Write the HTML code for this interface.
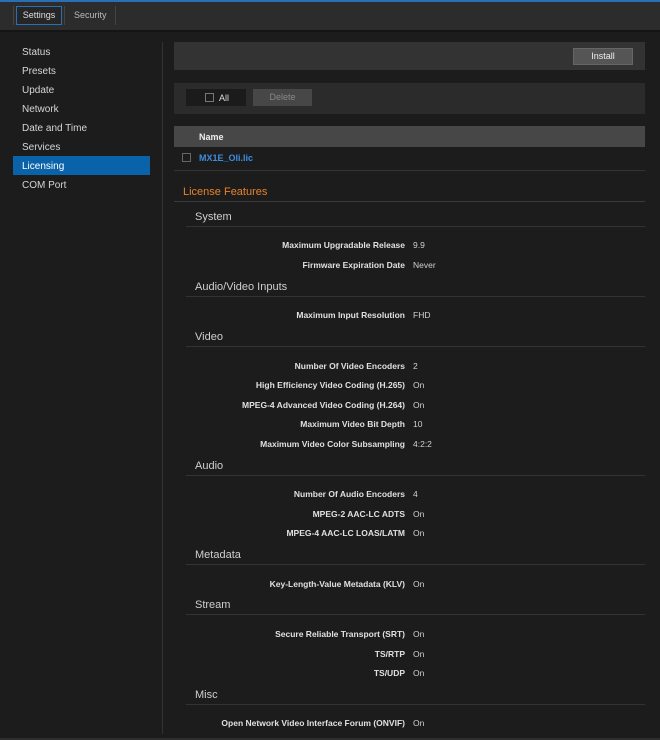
<!DOCTYPE html><html><head><style>
body{margin:0;width:660px;height:740px;background:#1c1c1c;font-family:"Liberation Sans",sans-serif;position:relative;overflow:hidden;color:#ddd}
div,span{position:absolute;box-sizing:border-box}
.t{font-size:9px;white-space:nowrap}
.nav{left:22px;font-size:10px;color:#d6d6d6}
.h{left:195px;font-size:11px;color:#cfcfcf}
.ln{left:186px;width:459px;height:1px;background:#333}
.l{right:255px;font-size:8.5px;font-weight:bold;color:#e0e0e0;white-space:nowrap}
.v{left:413px;font-size:8.5px;color:#d0d0d0}
</style></head><body>
<div style="left:0;top:0;width:660px;height:2px;background:#2a6fb5"></div>
<div style="left:0;top:2px;width:660px;height:28px;background:#2c2c2c"></div>
<div style="left:13px;top:6px;width:1px;height:19px;background:#444"></div>
<div style="left:16px;top:6px;width:46px;height:19px;border:1px solid #2a6fb5;background:#262626;font-size:9px;color:#ddd;text-align:center;line-height:17px">Settings</div>
<div style="left:64px;top:6px;width:1px;height:19px;background:#444"></div>
<div style="left:74px;top:6px;font-size:9px;color:#bbb;line-height:19px">Security</div>
<div style="left:115px;top:6px;width:1px;height:19px;background:#444"></div>
<div style="left:0;top:30px;width:660px;height:2px;background:#151515"></div>
<div class="nav" style="top:47px">Status</div>
<div class="nav" style="top:66px">Presets</div>
<div class="nav" style="top:85px">Update</div>
<div class="nav" style="top:104px">Network</div>
<div class="nav" style="top:123px">Date and Time</div>
<div class="nav" style="top:142px">Services</div>
<div style="left:13px;top:156px;width:137px;height:19px;background:#0a63a8"></div>
<div class="nav" style="top:161px;color:#fff">Licensing</div>
<div class="nav" style="top:180px">COM Port</div>
<div style="left:162px;top:42px;width:1px;height:692px;background:#333"></div>
<div style="left:174px;top:42px;width:471px;height:28px;background:#333"></div>
<div style="left:573px;top:48px;width:60px;height:17px;background:#555;border:1px solid #666;font-size:9px;color:#eee;text-align:center;line-height:15px">Install</div>
<div style="left:174px;top:83px;width:471px;height:31px;background:#2b2b2b"></div>
<div style="left:186px;top:89px;width:60px;height:17px;background:#1b1b1b"></div>
<div style="left:205px;top:93px;width:9px;height:9px;border:1px solid #777"></div>
<div class="t" style="left:219px;top:93px;color:#ddd">All</div>
<div style="left:253px;top:89px;width:59px;height:17px;background:#474747;font-size:9px;color:#888;text-align:center;line-height:17px">Delete</div>
<div style="left:174px;top:126px;width:471px;height:21px;background:#474747"></div>
<div class="t" style="left:199px;top:132px;font-weight:bold;color:#eee">Name</div>
<div style="left:182px;top:153px;width:9px;height:9px;border:1px solid #666"></div>
<div class="t" style="left:199px;top:153px;color:#3d8de0;font-weight:bold">MX1E_Oli.lic</div>
<div style="left:174px;top:170px;width:471px;height:1px;background:#333"></div>
<div style="left:183px;top:186px;font-size:11px;color:#e8822a">License Features</div>
<div style="left:174px;top:201px;width:471px;height:1px;background:#3a3a3a"></div>

<div class="h" style="top:211px">System</div><div class="ln" style="top:226px"></div>
<div class="l" style="top:240px">Maximum Upgradable Release</div><div class="v" style="top:240px">9.9</div>
<div class="l" style="top:260px">Firmware Expiration Date</div><div class="v" style="top:260px">Never</div>
<div class="h" style="top:281px">Audio/Video Inputs</div><div class="ln" style="top:296px"></div>
<div class="l" style="top:310px">Maximum Input Resolution</div><div class="v" style="top:310px">FHD</div>
<div class="h" style="top:331px">Video</div><div class="ln" style="top:346px"></div>
<div class="l" style="top:361px">Number Of Video Encoders</div><div class="v" style="top:361px">2</div>
<div class="l" style="top:380px">High Efficiency Video Coding (H.265)</div><div class="v" style="top:380px">On</div>
<div class="l" style="top:400px">MPEG-4 Advanced Video Coding (H.264)</div><div class="v" style="top:400px">On</div>
<div class="l" style="top:419px">Maximum Video Bit Depth</div><div class="v" style="top:419px">10</div>
<div class="l" style="top:439px">Maximum Video Color Subsampling</div><div class="v" style="top:439px">4:2:2</div>
<div class="h" style="top:460px">Audio</div><div class="ln" style="top:475px"></div>
<div class="l" style="top:489px">Number Of Audio Encoders</div><div class="v" style="top:489px">4</div>
<div class="l" style="top:509px">MPEG-2 AAC-LC ADTS</div><div class="v" style="top:509px">On</div>
<div class="l" style="top:528px">MPEG-4 AAC-LC LOAS/LATM</div><div class="v" style="top:528px">On</div>
<div class="h" style="top:549px">Metadata</div><div class="ln" style="top:564px"></div>
<div class="l" style="top:579px">Key-Length-Value Metadata (KLV)</div><div class="v" style="top:579px">On</div>
<div class="h" style="top:599px">Stream</div><div class="ln" style="top:614px"></div>
<div class="l" style="top:629px">Secure Reliable Transport (SRT)</div><div class="v" style="top:629px">On</div>
<div class="l" style="top:649px">TS/RTP</div><div class="v" style="top:649px">On</div>
<div class="l" style="top:668px">TS/UDP</div><div class="v" style="top:668px">On</div>
<div class="h" style="top:689px">Misc</div><div class="ln" style="top:704px"></div>
<div class="l" style="top:718px">Open Network Video Interface Forum (ONVIF)</div><div class="v" style="top:718px">On</div>
<div style="left:0;top:738px;width:660px;height:2px;background:#2e2e2e"></div>
</body></html>
